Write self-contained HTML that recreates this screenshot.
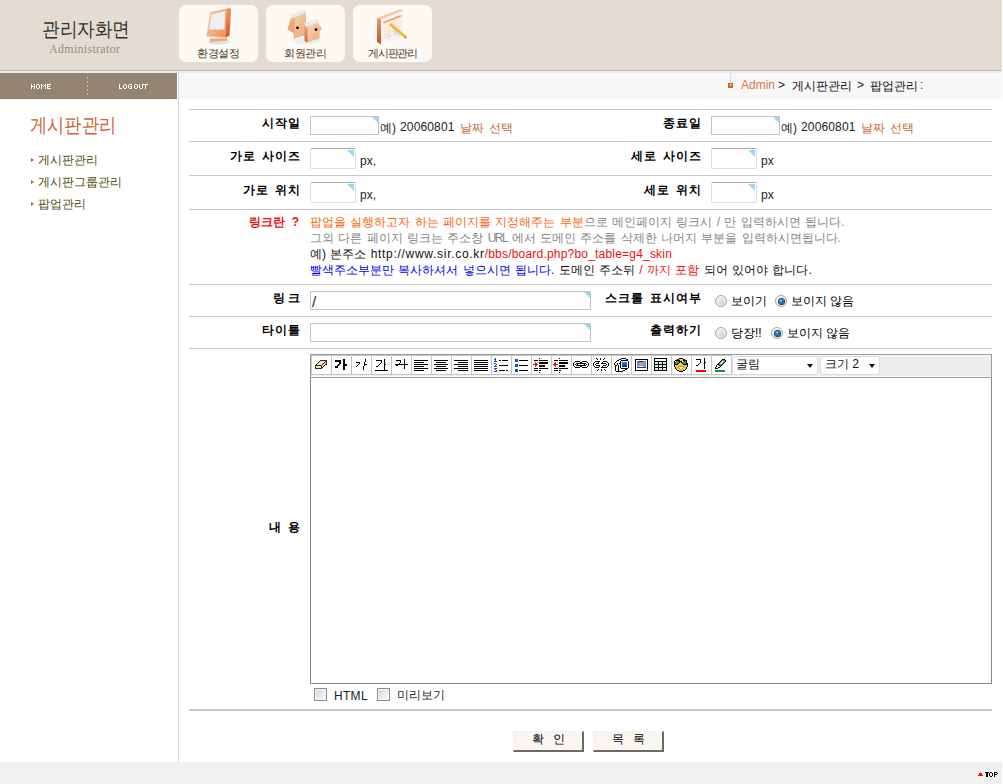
<!DOCTYPE html>
<html><head><meta charset="utf-8">
<style>
*{margin:0;padding:0;box-sizing:border-box}
html,body{width:1003px;height:784px;overflow:hidden;background:#fff;font-family:"Liberation Sans",sans-serif;font-size:12px;color:#333}
.a{position:absolute;white-space:nowrap}
#hdr{position:absolute;left:0;top:0;width:1002px;height:70px;background:#e4dcd3}
#hdrl1{position:absolute;left:0;top:70px;width:1002px;height:1px;background:#c9beb3}
#hdrl2{position:absolute;left:0;top:71px;width:1002px;height:2px;background:#eaebec}
.tab{position:absolute;top:5px;width:79px;height:57px;background:#fdfaf4;border-radius:7px}
.tabt{position:absolute;left:0;width:100%;top:41px;text-align:center;font-size:11px;color:#46392b;letter-spacing:-0.3px}
#nav{position:absolute;left:0;top:73px;width:177px;height:26px;background:#948472;border-bottom:1px solid #8b7a66}
#vline{position:absolute;left:178px;top:73px;width:1px;height:689px;background:#d8d8d8}
#crumb{position:absolute;left:179px;top:73px;width:823px;height:26px;background:#f7f7f7}
.hl{position:absolute;left:189px;width:803px;height:1px;background:#c9c9c9}
.lbl{position:absolute;font-weight:bold;color:#000;text-align:right;white-space:nowrap;letter-spacing:1px;word-spacing:2px}
.inp{position:absolute;border:1px solid #c4c4c4;background:#fff}
.inp:after{content:"";position:absolute;right:0;top:0;border-top:6px solid #93daf4;border-left:6px solid transparent}
.inp2{border-color:#a8a8a8 #d9dde6 #d9dde6 #d9dde6;border-radius:2px}
.inp2:after{top:1px;right:1px;border-top-width:7px;border-left-width:7px}
#foot{position:absolute;left:0;top:762px;width:1002px;height:22px;background:#f1f1f1}
.radio{position:absolute;width:12px;height:12px;border-radius:50%;border:1px solid #a4a4a4;background:radial-gradient(circle at 70% 75%,#cfd3d8 0,#e6e8ea 45%,#fafafa 100%);box-shadow:inset 0 0 0 1px #f4f4f4}
.radio.on:after{content:"";position:absolute;left:2.5px;top:2.5px;width:5px;height:5px;border-radius:50%;background:radial-gradient(circle at 40% 35%,#8fd4ff 0,#1f78c8 40%,#0a3570 100%);box-shadow:0 0 0 1px #1a3a66}
.cb{position:absolute;width:13px;height:13px;border:1px solid #8c8c8c;background:linear-gradient(135deg,#cfd2d6 0,#eceef0 60%,#fff 100%);box-shadow:inset 0 0 0 1px #f6f6f6}
.btn{position:absolute;height:21px;background:#f9f7ef;border-style:solid;border-width:1px 2px 2px 1px;border-color:#f2f2f2 #6a6a6a #6a6a6a #f2f2f2;font-size:12px;color:#000;text-align:center;line-height:14px;word-spacing:6px}
</style></head><body>
<div id="hdr"></div>
<div id="hdrl1"></div><div id="hdrl2"></div>
<div class="a" style="left:42px;top:16px;font-size:20px;color:#2e3032;transform:scaleX(0.88);transform-origin:0 0">관리자화면</div>
<div class="a" style="left:49px;top:42px;font-family:'Liberation Serif',serif;font-size:12px;color:#9b8b79;letter-spacing:0.3px">Administrator</div>

<div class="tab" style="left:179px"><div class="tabt">환경설정</div></div>
<div class="tab" style="left:266px"><div class="tabt">회원관리</div></div>
<div class="tab" style="left:353px"><div class="tabt" style="letter-spacing:-1.1px">게시판관리</div></div>
<svg class="a" style="left:179px;top:0" width="260" height="50"><defs>
<linearGradient id="mg1" x1="0" y1="0" x2="1" y2="1"><stop offset="0" stop-color="#fad4b6"/><stop offset="1" stop-color="#e98f58"/></linearGradient>
<linearGradient id="mg2" x1="0" y1="0" x2="0" y2="1"><stop offset="0" stop-color="#f0925a"/><stop offset="1" stop-color="#c8602e"/></linearGradient>
<linearGradient id="hg" x1="0" y1="0" x2="1" y2="1"><stop offset="0" stop-color="#fbd9b8"/><stop offset="1" stop-color="#eea77a"/></linearGradient>
<linearGradient id="hs" x1="0" y1="0" x2="0" y2="1"><stop offset="0" stop-color="#f2a478"/><stop offset="1" stop-color="#c8683a"/></linearGradient>
<linearGradient id="bs" x1="0" y1="0" x2="0" y2="1"><stop offset="0" stop-color="#ec9a68"/><stop offset="1" stop-color="#b8552a"/></linearGradient>
</defs>
<g transform="translate(-179,0)">
<!-- monitor -->
<ellipse cx="219" cy="42.3" rx="11.5" ry="2.2" fill="#dfe4ea"/>
<polygon points="210.5,38 226.5,37.2 228,40.8 209.5,42.2" fill="#f0a87c"/>
<polygon points="211,38 226.5,37.2 226.8,38.3 210.8,39.2" fill="#f9d6bd"/>
<polygon points="226,9 230.5,7.8 231,11 229.5,36 225,37.5" fill="url(#mg2)"/>
<polygon points="210,12 227,8.5 225.5,37 206.5,36.5" fill="url(#mg1)"/>
<polygon points="211.5,15 225,11.5 224.5,29.5 209,29.5" fill="#efeff2"/>
<polygon points="211.5,15 225,11.5 225,12.5 211.3,16" fill="#fbfbfc"/>
<!-- heads -->
<ellipse cx="306" cy="40.5" rx="15" ry="3.5" fill="#eceef0"/>
<polygon points="291,17 306,11 306,35 294,38.5 293.5,33 287.5,29.5" fill="url(#hg)"/>
<polygon points="291,18 295,17 294.5,38.5 293.5,33 287.5,29.5" fill="#eb9c6c" opacity="0.7"/>
<polygon points="290,15.5 305.5,9 306,12.5 291,19" fill="#e9ebf1"/>
<circle cx="297.5" cy="27.8" r="1.4" fill="#000"/>
<polygon points="305,25.5 318,20.5 318.5,24 322,28.6 319.5,32 319.5,38.5 307,42.5" fill="url(#hg)"/>
<polygon points="304.5,25.5 307.5,26.5 307.5,42.5 304.5,41" fill="url(#hs)"/>
<polygon points="304,23.5 318,18.5 319,22 306,27" fill="#e9ebf1"/>
<circle cx="316" cy="29.6" r="1.4" fill="#000"/>
<!-- board -->
<polygon points="377,18 381.2,19.5 381.2,44.6 377,42" fill="url(#bs)"/>
<polygon points="377,18 400,9.3 403.7,10.4 381.2,19.5" fill="#f7c7a0"/>
<polygon points="381.2,19.5 403.7,10.4 403.7,38.2 381.2,44.6" fill="#f3f3f5"/>
<g stroke="#f7d2b0" stroke-width="0.6">
<line x1="383.5" y1="26" x2="401.5" y2="19"/><line x1="383.5" y1="29" x2="401.5" y2="22"/><line x1="383.5" y1="32" x2="401.5" y2="25"/><line x1="383.5" y1="35" x2="401.5" y2="28"/><line x1="383.5" y1="38" x2="401.5" y2="31"/>
<line x1="389" y1="21" x2="389" y2="40"/><line x1="395" y1="18.5" x2="395" y2="37.5"/>
</g>
<line x1="383.4" y1="22.7" x2="401" y2="15.7" stroke="#ee9a50" stroke-width="1.6"/>
<polygon points="390,24 396,36 402,36" fill="#d8d8dc" opacity="0.7"/>
<line x1="390" y1="24" x2="405.5" y2="37" stroke="#f4b818" stroke-width="2.6"/>
<circle cx="405.8" cy="37.3" r="1.3" fill="#e89040"/>
</g></svg>


<div id="nav"></div>
<svg class="a" style="left:0;top:0" width="180" height="100" shape-rendering="crispEdges"><g fill="#fff"><rect x="31" y="84" width="1" height="1"/><rect x="34" y="84" width="1" height="1"/><rect x="31" y="85" width="1" height="1"/><rect x="34" y="85" width="1" height="1"/><rect x="31" y="86" width="4" height="1"/><rect x="31" y="87" width="1" height="1"/><rect x="34" y="87" width="1" height="1"/><rect x="31" y="88" width="1" height="1"/><rect x="34" y="88" width="1" height="1"/><rect x="37" y="84" width="2" height="1"/><rect x="36" y="85" width="1" height="1"/><rect x="39" y="85" width="1" height="1"/><rect x="36" y="86" width="1" height="1"/><rect x="39" y="86" width="1" height="1"/><rect x="36" y="87" width="1" height="1"/><rect x="39" y="87" width="1" height="1"/><rect x="37" y="88" width="2" height="1"/><rect x="41" y="84" width="1" height="1"/><rect x="45" y="84" width="1" height="1"/><rect x="41" y="85" width="2" height="1"/><rect x="44" y="85" width="2" height="1"/><rect x="41" y="86" width="1" height="1"/><rect x="43" y="86" width="1" height="1"/><rect x="45" y="86" width="1" height="1"/><rect x="41" y="87" width="1" height="1"/><rect x="45" y="87" width="1" height="1"/><rect x="41" y="88" width="1" height="1"/><rect x="45" y="88" width="1" height="1"/><rect x="47" y="84" width="4" height="1"/><rect x="47" y="85" width="1" height="1"/><rect x="47" y="86" width="3" height="1"/><rect x="47" y="87" width="1" height="1"/><rect x="47" y="88" width="4" height="1"/><rect x="119" y="84" width="1" height="1"/><rect x="119" y="85" width="1" height="1"/><rect x="119" y="86" width="1" height="1"/><rect x="119" y="87" width="1" height="1"/><rect x="119" y="88" width="3" height="1"/><rect x="124" y="84" width="2" height="1"/><rect x="123" y="85" width="1" height="1"/><rect x="126" y="85" width="1" height="1"/><rect x="123" y="86" width="1" height="1"/><rect x="126" y="86" width="1" height="1"/><rect x="123" y="87" width="1" height="1"/><rect x="126" y="87" width="1" height="1"/><rect x="124" y="88" width="2" height="1"/><rect x="129" y="84" width="3" height="1"/><rect x="128" y="85" width="1" height="1"/><rect x="128" y="86" width="1" height="1"/><rect x="130" y="86" width="2" height="1"/><rect x="128" y="87" width="1" height="1"/><rect x="131" y="87" width="1" height="1"/><rect x="129" y="88" width="3" height="1"/><rect x="135" y="84" width="2" height="1"/><rect x="134" y="85" width="1" height="1"/><rect x="137" y="85" width="1" height="1"/><rect x="134" y="86" width="1" height="1"/><rect x="137" y="86" width="1" height="1"/><rect x="134" y="87" width="1" height="1"/><rect x="137" y="87" width="1" height="1"/><rect x="135" y="88" width="2" height="1"/><rect x="139" y="84" width="1" height="1"/><rect x="142" y="84" width="1" height="1"/><rect x="139" y="85" width="1" height="1"/><rect x="142" y="85" width="1" height="1"/><rect x="139" y="86" width="1" height="1"/><rect x="142" y="86" width="1" height="1"/><rect x="139" y="87" width="1" height="1"/><rect x="142" y="87" width="1" height="1"/><rect x="140" y="88" width="2" height="1"/><rect x="143" y="84" width="5" height="1"/><rect x="145" y="85" width="1" height="1"/><rect x="145" y="86" width="1" height="1"/><rect x="145" y="87" width="1" height="1"/><rect x="145" y="88" width="1" height="1"/></g></svg>
<div class="a" style="left:87px;top:77px;width:1px;height:18px;background:repeating-linear-gradient(to bottom,#cdbfb0 0,#cdbfb0 2px,transparent 2px,transparent 4px)"></div>

<div id="vline"></div>
<div id="crumb"></div>
<div class="a" style="left:730px;top:73px;width:1px;height:10px;background:#dedede"></div>
<div class="a" style="left:728px;top:83px;width:5px;height:5px;background:#d0642e"></div>
<div class="a" style="left:730px;top:84px;width:0;height:0;border-left:2px solid #fff;border-top:1.5px solid transparent;border-bottom:1.5px solid transparent"></div>
<div class="a" style="left:741px;top:78px;font-size:12px;color:#db7a43">Admin</div>
<div class="a" style="left:778px;top:78px;font-size:12px;color:#222">&gt;</div>
<div class="a" style="left:792px;top:78px;font-size:12px;color:#111">게시판관리</div>
<div class="a" style="left:857px;top:78px;font-size:12px;color:#222">&gt;</div>
<div class="a" style="left:870px;top:78px;font-size:12px;color:#111">팝업관리</div>
<div class="a" style="left:920px;top:78px;font-size:12px;color:#444">:</div>

<div class="a" style="left:30px;top:112px;font-size:20px;color:#cf6236;transform:scaleX(0.86);transform-origin:0 0">게시판관리</div>
<div class="a" style="left:31px;top:158px;width:0;height:0;border-left:3px solid #c8582a;border-top:2.5px solid transparent;border-bottom:2.5px solid transparent"></div>
<div class="a" style="left:31px;top:180px;width:0;height:0;border-left:3px solid #c8582a;border-top:2.5px solid transparent;border-bottom:2.5px solid transparent"></div>
<div class="a" style="left:31px;top:202px;width:0;height:0;border-left:3px solid #c8582a;border-top:2.5px solid transparent;border-bottom:2.5px solid transparent"></div>
<div class="a" style="left:38px;top:152px;color:#4c4a0e">게시판관리</div>
<div class="a" style="left:38px;top:174px;color:#4c4a0e">게시판그룹관리</div>
<div class="a" style="left:38px;top:196px;color:#4c4a0e">팝업관리</div>

<!-- form lines -->
<div class="hl" style="top:109px"></div>
<div class="hl" style="top:141px"></div>
<div class="hl" style="top:175px"></div>
<div class="hl" style="top:209px"></div>
<div class="hl" style="top:284px"></div>
<div class="hl" style="top:316px"></div>
<div class="hl" style="top:348px"></div>
<div class="hl" style="top:709px;height:2px"></div>

<!-- row 1 -->
<div class="lbl" style="left:202px;width:99px;top:115px">시작일</div>
<div class="inp" style="left:310px;top:116px;width:69px;height:19px"></div>
<div class="a" style="left:380px;top:120px;color:#222">예)</div><div class="a" style="left:400px;top:120px;color:#222;letter-spacing:0.15px">20060801</div><div class="a" style="left:460px;top:120px;color:#c8683a;word-spacing:2px">날짜 선택</div>
<div class="lbl" style="left:602px;width:100px;top:115px">종료일</div>
<div class="inp" style="left:711px;top:116px;width:69px;height:19px"></div>
<div class="a" style="left:781px;top:120px;color:#222">예)</div><div class="a" style="left:801px;top:120px;color:#222;letter-spacing:0.15px">20060801</div><div class="a" style="left:861px;top:120px;color:#c8683a;word-spacing:2px">날짜 선택</div>

<!-- row 2 -->
<div class="lbl" style="left:202px;width:99px;top:148px">가로 사이즈</div>
<div class="inp inp2" style="left:310px;top:148px;width:46px;height:21px"></div>
<div class="a" style="left:360px;top:154px;color:#222">px,</div>
<div class="lbl" style="left:602px;width:100px;top:148px">세로 사이즈</div>
<div class="inp inp2" style="left:711px;top:148px;width:46px;height:21px"></div>
<div class="a" style="left:761px;top:154px;color:#222">px</div>

<!-- row 3 -->
<div class="lbl" style="left:202px;width:99px;top:182px">가로 위치</div>
<div class="inp inp2" style="left:310px;top:182px;width:46px;height:21px"></div>
<div class="a" style="left:360px;top:188px;color:#222">px,</div>
<div class="lbl" style="left:602px;width:100px;top:182px">세로 위치</div>
<div class="inp inp2" style="left:711px;top:182px;width:46px;height:21px"></div>
<div class="a" style="left:761px;top:188px;color:#222">px</div>

<!-- link help -->
<div class="lbl" style="left:200px;width:99px;top:214px;color:#f01010;letter-spacing:0;word-spacing:3px">링크란 ?</div>
<div class="a" style="left:310px;top:214px;line-height:16px;word-spacing:1px">
<span style="color:#ff6208">팝업을 실행하고자 하는 페이지를 지정해주는 부분</span><span style="color:#858585">으로 메인페이지 링크시 / 만 입력하시면 됩니다.</span><br>
<span style="color:#858585">그외 다른 페이지 링크는 주소창 <span style="letter-spacing:-1.5px">URL</span> 에서 도메인 주소를 삭제한 나머지 부분을 입력하시면됩니다.</span><br>
<span style="color:#111">예) 본주소 <span style="letter-spacing:0.7px">http://www.sir.co.kr</span></span><span style="color:#f20d0d;letter-spacing:0.2px">/bbs/board.php?bo_table=g4_skin</span><br>
<span style="color:#0000f0">빨색주소부분만 복사하셔서 넣으시면 됩니다.</span><span style="color:#111"> 도메인 주소뒤 </span><span style="color:#f20d0d">/ 까지 포함</span><span style="color:#111"> 되어 있어야 합니다.</span>
</div>

<!-- link row -->
<div class="lbl" style="left:204px;width:99px;top:290px;letter-spacing:3px">링크</div>
<div class="inp" style="left:310px;top:291px;width:281px;height:19px"><span class="a" style="left:1px;top:1px;color:#222;font-size:15px">/</span></div>
<div class="lbl" style="left:602px;width:100px;top:290px">스크롤 표시여부</div>
<div class="radio" style="left:715px;top:295px"></div>
<div class="a" style="left:731px;top:293px;color:#000">보이기</div>
<div class="radio on" style="left:775px;top:295px"></div>
<div class="a" style="left:791px;top:293px;color:#000">보이지 않음</div>

<!-- title row -->
<div class="lbl" style="left:202px;width:99px;top:322px">타이틀</div>
<div class="inp" style="left:310px;top:323px;width:281px;height:19px"></div>
<div class="lbl" style="left:602px;width:100px;top:322px">출력하기</div>
<div class="radio" style="left:715px;top:327px"></div>
<div class="a" style="left:731px;top:325px;color:#000">당장!!</div>
<div class="radio on" style="left:771px;top:327px"></div>
<div class="a" style="left:787px;top:325px;color:#000">보이지 않음</div>

<!-- content -->
<div class="lbl" style="left:202px;width:99px;top:519px">내 용</div>
<div id="editor" class="a" style="left:310px;top:354px;width:682px;height:330px;border:1px solid #8a8a8a;background:#fff"></div>
<svg class="a" style="left:310px;top:354px" width="682" height="24" shape-rendering="crispEdges"><g transform="translate(-310,-354)"><rect x="310" y="354" width="682" height="24" fill="#eeeeee"/><rect x="310" y="354" width="682" height="1" fill="#9a9a9a"/><rect x="310" y="377" width="682" height="1" fill="#9a9a9a"/><rect x="310" y="354" width="1" height="24" fill="#9a9a9a"/><rect x="991" y="354" width="1" height="24" fill="#9a9a9a"/><rect x="311" y="355" width="680" height="1" fill="#fafafa"/><rect x="311" y="376" width="680" height="1" fill="#fafafa"/><rect x="311" y="355" width="21" height="20" fill="#c6c6c6"/><rect x="312" y="356" width="19" height="18" fill="#ffffff"/><rect x="331" y="355" width="21" height="20" fill="#c6c6c6"/><rect x="332" y="356" width="19" height="18" fill="#ffffff"/><rect x="351" y="355" width="21" height="20" fill="#c6c6c6"/><rect x="352" y="356" width="19" height="18" fill="#ffffff"/><rect x="371" y="355" width="21" height="20" fill="#c6c6c6"/><rect x="372" y="356" width="19" height="18" fill="#ffffff"/><rect x="391" y="355" width="21" height="20" fill="#c6c6c6"/><rect x="392" y="356" width="19" height="18" fill="#ffffff"/><rect x="411" y="355" width="21" height="20" fill="#c6c6c6"/><rect x="412" y="356" width="19" height="18" fill="#ffffff"/><rect x="431" y="355" width="21" height="20" fill="#c6c6c6"/><rect x="432" y="356" width="19" height="18" fill="#ffffff"/><rect x="451" y="355" width="21" height="20" fill="#c6c6c6"/><rect x="452" y="356" width="19" height="18" fill="#ffffff"/><rect x="471" y="355" width="21" height="20" fill="#c6c6c6"/><rect x="472" y="356" width="19" height="18" fill="#ffffff"/><rect x="491" y="355" width="21" height="20" fill="#c6c6c6"/><rect x="492" y="356" width="19" height="18" fill="#ffffff"/><rect x="511" y="355" width="21" height="20" fill="#c6c6c6"/><rect x="512" y="356" width="19" height="18" fill="#ffffff"/><rect x="531" y="355" width="21" height="20" fill="#c6c6c6"/><rect x="532" y="356" width="19" height="18" fill="#ffffff"/><rect x="551" y="355" width="21" height="20" fill="#c6c6c6"/><rect x="552" y="356" width="19" height="18" fill="#ffffff"/><rect x="571" y="355" width="21" height="20" fill="#c6c6c6"/><rect x="572" y="356" width="19" height="18" fill="#ffffff"/><rect x="591" y="355" width="21" height="20" fill="#c6c6c6"/><rect x="592" y="356" width="19" height="18" fill="#ffffff"/><rect x="611" y="355" width="21" height="20" fill="#c6c6c6"/><rect x="612" y="356" width="19" height="18" fill="#ffffff"/><rect x="631" y="355" width="21" height="20" fill="#c6c6c6"/><rect x="632" y="356" width="19" height="18" fill="#ffffff"/><rect x="651" y="355" width="21" height="20" fill="#c6c6c6"/><rect x="652" y="356" width="19" height="18" fill="#ffffff"/><rect x="671" y="355" width="21" height="20" fill="#c6c6c6"/><rect x="672" y="356" width="19" height="18" fill="#ffffff"/><rect x="691" y="355" width="21" height="20" fill="#c6c6c6"/><rect x="692" y="356" width="19" height="18" fill="#ffffff"/><rect x="711" y="355" width="21" height="20" fill="#c6c6c6"/><rect x="712" y="356" width="19" height="18" fill="#ffffff"/><rect x="320" y="360" width="7" height="1" fill="#2b2b2b"/><rect x="319" y="361" width="1" height="1" fill="#2b2b2b"/><rect x="320" y="361" width="5" height="1" fill="#fde2c2"/><rect x="325" y="361" width="2" height="1" fill="#2b2b2b"/><rect x="318" y="362" width="1" height="1" fill="#2b2b2b"/><rect x="319" y="362" width="5" height="1" fill="#fde2c2"/><rect x="324" y="362" width="1" height="1" fill="#2b2b2b"/><rect x="325" y="362" width="1" height="1" fill="#f8d3ad"/><rect x="326" y="362" width="1" height="1" fill="#2b2b2b"/><rect x="317" y="363" width="1" height="1" fill="#2b2b2b"/><rect x="318" y="363" width="5" height="1" fill="#fde2c2"/><rect x="323" y="363" width="1" height="1" fill="#2b2b2b"/><rect x="324" y="363" width="2" height="1" fill="#f8d3ad"/><rect x="326" y="363" width="1" height="1" fill="#2b2b2b"/><rect x="316" y="364" width="1" height="1" fill="#2b2b2b"/><rect x="317" y="364" width="5" height="1" fill="#fde2c2"/><rect x="322" y="364" width="1" height="1" fill="#2b2b2b"/><rect x="323" y="364" width="2" height="1" fill="#f8d3ad"/><rect x="325" y="364" width="2" height="1" fill="#2b2b2b"/><rect x="315" y="365" width="7" height="1" fill="#2b2b2b"/><rect x="322" y="365" width="2" height="1" fill="#f8d3ad"/><rect x="324" y="365" width="1" height="1" fill="#2b2b2b"/><rect x="315" y="366" width="1" height="1" fill="#2b2b2b"/><rect x="316" y="366" width="5" height="1" fill="#fde2c2"/><rect x="321" y="366" width="1" height="1" fill="#2b2b2b"/><rect x="322" y="366" width="1" height="1" fill="#f8d3ad"/><rect x="323" y="366" width="1" height="1" fill="#2b2b2b"/><rect x="315" y="367" width="1" height="1" fill="#2b2b2b"/><rect x="316" y="367" width="5" height="1" fill="#fde2c2"/><rect x="321" y="367" width="2" height="1" fill="#2b2b2b"/><rect x="315" y="368" width="7" height="1" fill="#2b2b2b"/><rect x="335" y="360" width="6" height="2" fill="#000"/><rect x="339" y="362" width="2" height="2" fill="#000"/><rect x="338" y="364" width="2" height="1" fill="#000"/><rect x="337" y="365" width="2" height="1" fill="#000"/><rect x="335" y="366" width="3" height="2" fill="#000"/><rect x="343" y="359" width="2" height="11" fill="#000"/><rect x="345" y="364" width="2" height="2" fill="#000"/><rect x="365" y="359" width="1" height="1" fill="#000"/><rect x="365" y="360" width="1" height="1" fill="#000"/><rect x="365" y="361" width="1" height="1" fill="#000"/><rect x="356" y="362" width="4" height="1" fill="#000"/><rect x="364" y="362" width="1" height="1" fill="#000"/><rect x="359" y="363" width="1" height="1" fill="#000"/><rect x="364" y="363" width="1" height="1" fill="#000"/><rect x="358" y="364" width="1" height="1" fill="#000"/><rect x="364" y="364" width="3" height="1" fill="#000"/><rect x="357" y="365" width="1" height="1" fill="#000"/><rect x="364" y="365" width="1" height="1" fill="#000"/><rect x="356" y="366" width="1" height="1" fill="#000"/><rect x="363" y="366" width="1" height="1" fill="#000"/><rect x="363" y="367" width="1" height="1" fill="#000"/><rect x="363" y="368" width="1" height="1" fill="#000"/><rect x="363" y="369" width="1" height="1" fill="#000"/><rect x="384" y="359" width="1" height="1" fill="#000"/><rect x="376" y="360" width="6" height="1" fill="#000"/><rect x="384" y="360" width="1" height="1" fill="#000"/><rect x="381" y="361" width="1" height="1" fill="#000"/><rect x="384" y="361" width="1" height="1" fill="#000"/><rect x="381" y="362" width="1" height="1" fill="#000"/><rect x="384" y="362" width="1" height="1" fill="#000"/><rect x="380" y="363" width="1" height="1" fill="#000"/><rect x="384" y="363" width="1" height="1" fill="#000"/><rect x="379" y="364" width="1" height="1" fill="#000"/><rect x="384" y="364" width="2" height="1" fill="#000"/><rect x="378" y="365" width="1" height="1" fill="#000"/><rect x="384" y="365" width="1" height="1" fill="#000"/><rect x="376" y="366" width="2" height="1" fill="#000"/><rect x="384" y="366" width="1" height="1" fill="#000"/><rect x="384" y="367" width="1" height="1" fill="#000"/><rect x="384" y="368" width="1" height="1" fill="#000"/><rect x="384" y="369" width="1" height="1" fill="#000"/><rect x="375" y="370" width="13" height="1" fill="#000"/><rect x="404" y="359" width="1" height="1" fill="#000"/><rect x="396" y="360" width="5" height="1" fill="#000"/><rect x="404" y="360" width="1" height="1" fill="#000"/><rect x="400" y="361" width="1" height="1" fill="#000"/><rect x="404" y="361" width="1" height="1" fill="#000"/><rect x="400" y="362" width="1" height="1" fill="#000"/><rect x="404" y="362" width="1" height="1" fill="#000"/><rect x="399" y="363" width="1" height="1" fill="#000"/><rect x="404" y="363" width="1" height="1" fill="#000"/><rect x="395" y="364" width="13" height="1" fill="#000"/><rect x="396" y="365" width="2" height="1" fill="#000"/><rect x="404" y="365" width="1" height="1" fill="#000"/><rect x="404" y="366" width="1" height="1" fill="#000"/><rect x="404" y="367" width="1" height="1" fill="#000"/><rect x="404" y="368" width="1" height="1" fill="#000"/><rect x="414" y="360" width="14" height="1" fill="#000"/><rect x="434" y="360" width="14" height="1" fill="#000"/><rect x="454" y="360" width="14" height="1" fill="#000"/><rect x="474" y="360" width="14" height="1" fill="#000"/><rect x="414" y="362" width="10" height="1" fill="#000"/><rect x="436" y="362" width="10" height="1" fill="#000"/><rect x="458" y="362" width="10" height="1" fill="#000"/><rect x="474" y="362" width="14" height="1" fill="#000"/><rect x="414" y="364" width="14" height="1" fill="#000"/><rect x="434" y="364" width="14" height="1" fill="#000"/><rect x="454" y="364" width="14" height="1" fill="#000"/><rect x="474" y="364" width="14" height="1" fill="#000"/><rect x="414" y="366" width="10" height="1" fill="#000"/><rect x="436" y="366" width="10" height="1" fill="#000"/><rect x="458" y="366" width="10" height="1" fill="#000"/><rect x="474" y="366" width="14" height="1" fill="#000"/><rect x="414" y="368" width="14" height="1" fill="#000"/><rect x="434" y="368" width="14" height="1" fill="#000"/><rect x="454" y="368" width="14" height="1" fill="#000"/><rect x="474" y="368" width="14" height="1" fill="#000"/><rect x="414" y="370" width="10" height="1" fill="#000"/><rect x="436" y="370" width="10" height="1" fill="#000"/><rect x="458" y="370" width="10" height="1" fill="#000"/><rect x="474" y="370" width="14" height="1" fill="#000"/><rect x="495" y="358" width="1" height="1" fill="#1452b8"/><rect x="494" y="359" width="2" height="1" fill="#1452b8"/><rect x="495" y="360" width="1" height="1" fill="#1452b8"/><rect x="494" y="361" width="3" height="1" fill="#1452b8"/><rect x="494" y="363" width="2" height="1" fill="#1452b8"/><rect x="496" y="364" width="1" height="1" fill="#1452b8"/><rect x="495" y="365" width="1" height="1" fill="#1452b8"/><rect x="494" y="366" width="3" height="1" fill="#1452b8"/><rect x="494" y="368" width="3" height="1" fill="#1452b8"/><rect x="495" y="369" width="1" height="1" fill="#1452b8"/><rect x="496" y="370" width="1" height="1" fill="#1452b8"/><rect x="494" y="371" width="3" height="1" fill="#1452b8"/><rect x="499" y="360" width="2" height="1" fill="#000"/><rect x="502" y="360" width="6" height="1" fill="#000"/><rect x="499" y="365" width="9" height="1" fill="#000"/><rect x="499" y="370" width="6" height="1" fill="#000"/><rect x="506" y="370" width="2" height="1" fill="#000"/><rect x="515" y="359" width="3" height="3" fill="#1553b6"/><rect x="519" y="360" width="9" height="1" fill="#000"/><rect x="515" y="364" width="3" height="3" fill="#1553b6"/><rect x="519" y="365" width="9" height="1" fill="#000"/><rect x="515" y="369" width="3" height="3" fill="#1553b6"/><rect x="519" y="370" width="9" height="1" fill="#000"/><rect x="539" y="358" width="1" height="1" fill="#000"/><rect x="539" y="372" width="1" height="1" fill="#000"/><rect x="534" y="360" width="4" height="1" fill="#000"/><rect x="534" y="368" width="4" height="1" fill="#000"/><rect x="534" y="370" width="4" height="1" fill="#000"/><rect x="539" y="360" width="9" height="1" fill="#000"/><rect x="539" y="362" width="9" height="2" fill="#000"/><rect x="539" y="365" width="6" height="2" fill="#000"/><rect x="539" y="368" width="9" height="1" fill="#000"/><rect x="539" y="370" width="2" height="1" fill="#000"/><rect x="533" y="364" width="5" height="1" fill="#d8141b"/><rect x="535" y="362" width="1" height="5" fill="#d8141b"/><rect x="536" y="363" width="1" height="3" fill="#d8141b"/><rect x="559" y="358" width="1" height="1" fill="#000"/><rect x="559" y="372" width="1" height="1" fill="#000"/><rect x="554" y="360" width="4" height="1" fill="#000"/><rect x="554" y="368" width="4" height="1" fill="#000"/><rect x="554" y="370" width="4" height="1" fill="#000"/><rect x="559" y="360" width="9" height="1" fill="#000"/><rect x="559" y="362" width="9" height="2" fill="#000"/><rect x="559" y="365" width="6" height="2" fill="#000"/><rect x="559" y="368" width="9" height="1" fill="#000"/><rect x="559" y="370" width="2" height="1" fill="#000"/><rect x="553" y="364" width="5" height="1" fill="#d8141b"/><rect x="555" y="362" width="1" height="5" fill="#d8141b"/><rect x="554" y="363" width="1" height="3" fill="#d8141b"/><rect x="575" y="361" width="5" height="1" fill="#000"/><rect x="582" y="361" width="5" height="1" fill="#000"/><rect x="574" y="362" width="1" height="1" fill="#000"/><rect x="580" y="362" width="2" height="1" fill="#000"/><rect x="587" y="362" width="1" height="1" fill="#000"/><rect x="573" y="363" width="1" height="1" fill="#000"/><rect x="576" y="363" width="10" height="1" fill="#000"/><rect x="588" y="363" width="1" height="1" fill="#000"/><rect x="573" y="364" width="1" height="1" fill="#000"/><rect x="575" y="364" width="1" height="1" fill="#000"/><rect x="577" y="364" width="1" height="1" fill="#000"/><rect x="584" y="364" width="1" height="1" fill="#000"/><rect x="586" y="364" width="1" height="1" fill="#000"/><rect x="588" y="364" width="1" height="1" fill="#000"/><rect x="573" y="365" width="1" height="1" fill="#000"/><rect x="576" y="365" width="10" height="1" fill="#000"/><rect x="588" y="365" width="1" height="1" fill="#000"/><rect x="574" y="366" width="1" height="1" fill="#000"/><rect x="580" y="366" width="2" height="1" fill="#000"/><rect x="587" y="366" width="1" height="1" fill="#000"/><rect x="575" y="367" width="5" height="1" fill="#000"/><rect x="582" y="367" width="5" height="1" fill="#000"/><rect x="596" y="358" width="1" height="1" fill="#000"/><rect x="600" y="358" width="1" height="1" fill="#000"/><rect x="604" y="358" width="1" height="1" fill="#000"/><rect x="597" y="359" width="1" height="1" fill="#000"/><rect x="600" y="359" width="1" height="1" fill="#000"/><rect x="603" y="359" width="1" height="1" fill="#000"/><rect x="595" y="361" width="5" height="1" fill="#000"/><rect x="603" y="361" width="4" height="1" fill="#000"/><rect x="594" y="362" width="1" height="1" fill="#000"/><rect x="598" y="362" width="1" height="1" fill="#000"/><rect x="602" y="362" width="1" height="1" fill="#000"/><rect x="607" y="362" width="1" height="1" fill="#000"/><rect x="593" y="363" width="1" height="1" fill="#000"/><rect x="596" y="363" width="3" height="1" fill="#000"/><rect x="601" y="363" width="5" height="1" fill="#000"/><rect x="608" y="363" width="1" height="1" fill="#000"/><rect x="593" y="364" width="1" height="1" fill="#000"/><rect x="595" y="364" width="1" height="1" fill="#000"/><rect x="606" y="364" width="1" height="1" fill="#000"/><rect x="608" y="364" width="1" height="1" fill="#000"/><rect x="593" y="365" width="1" height="1" fill="#000"/><rect x="596" y="365" width="4" height="1" fill="#000"/><rect x="603" y="365" width="3" height="1" fill="#000"/><rect x="608" y="365" width="1" height="1" fill="#000"/><rect x="594" y="366" width="1" height="1" fill="#000"/><rect x="599" y="366" width="1" height="1" fill="#000"/><rect x="602" y="366" width="1" height="1" fill="#000"/><rect x="607" y="366" width="1" height="1" fill="#000"/><rect x="595" y="367" width="4" height="1" fill="#000"/><rect x="601" y="367" width="6" height="1" fill="#000"/><rect x="598" y="369" width="1" height="1" fill="#000"/><rect x="601" y="369" width="1" height="1" fill="#000"/><rect x="604" y="369" width="1" height="1" fill="#000"/><rect x="597" y="370" width="1" height="1" fill="#000"/><rect x="601" y="370" width="1" height="1" fill="#000"/><rect x="605" y="370" width="1" height="1" fill="#000"/><rect x="621" y="358" width="5" height="1" fill="#000"/><rect x="619" y="359" width="2" height="1" fill="#000"/><rect x="621" y="359" width="5" height="1" fill="#ffffff"/><rect x="626" y="359" width="2" height="1" fill="#000"/><rect x="617" y="360" width="2" height="1" fill="#000"/><rect x="621" y="360" width="7" height="1" fill="#000"/><rect x="616" y="361" width="1" height="1" fill="#000"/><rect x="620" y="361" width="1" height="1" fill="#000"/><rect x="621" y="361" width="7" height="1" fill="#ffffff"/><rect x="628" y="361" width="1" height="1" fill="#000"/><rect x="615" y="362" width="1" height="1" fill="#000"/><rect x="620" y="362" width="1" height="1" fill="#000"/><rect x="621" y="362" width="1" height="1" fill="#ffffff"/><rect x="622" y="362" width="5" height="1" fill="#1a78f8"/><rect x="627" y="362" width="1" height="1" fill="#ffffff"/><rect x="628" y="362" width="1" height="1" fill="#000"/><rect x="614" y="363" width="1" height="1" fill="#000"/><rect x="617" y="363" width="1" height="1" fill="#000"/><rect x="619" y="363" width="2" height="1" fill="#000"/><rect x="621" y="363" width="1" height="1" fill="#ffffff"/><rect x="622" y="363" width="5" height="1" fill="#1a78f8"/><rect x="627" y="363" width="1" height="1" fill="#ffffff"/><rect x="628" y="363" width="1" height="1" fill="#000"/><rect x="614" y="364" width="1" height="1" fill="#000"/><rect x="617" y="364" width="1" height="1" fill="#000"/><rect x="620" y="364" width="1" height="1" fill="#000"/><rect x="621" y="364" width="1" height="1" fill="#ffffff"/><rect x="622" y="364" width="5" height="1" fill="#0a50d0"/><rect x="627" y="364" width="1" height="1" fill="#ffffff"/><rect x="628" y="364" width="1" height="1" fill="#000"/><rect x="615" y="365" width="2" height="1" fill="#000"/><rect x="618" y="365" width="1" height="1" fill="#000"/><rect x="620" y="365" width="1" height="1" fill="#000"/><rect x="621" y="365" width="1" height="1" fill="#ffffff"/><rect x="622" y="365" width="5" height="1" fill="#0a50d0"/><rect x="627" y="365" width="1" height="1" fill="#ffffff"/><rect x="628" y="365" width="1" height="1" fill="#000"/><rect x="615" y="366" width="1" height="1" fill="#000"/><rect x="618" y="366" width="1" height="1" fill="#000"/><rect x="620" y="366" width="1" height="1" fill="#000"/><rect x="621" y="366" width="1" height="1" fill="#ffffff"/><rect x="622" y="366" width="5" height="1" fill="#001a90"/><rect x="627" y="366" width="1" height="1" fill="#ffffff"/><rect x="628" y="366" width="1" height="1" fill="#000"/><rect x="615" y="367" width="1" height="1" fill="#000"/><rect x="618" y="367" width="1" height="1" fill="#000"/><rect x="620" y="367" width="1" height="1" fill="#000"/><rect x="621" y="367" width="7" height="1" fill="#ffffff"/><rect x="628" y="367" width="1" height="1" fill="#000"/><rect x="615" y="368" width="1" height="1" fill="#000"/><rect x="618" y="368" width="1" height="1" fill="#000"/><rect x="621" y="368" width="7" height="1" fill="#000"/><rect x="615" y="369" width="1" height="1" fill="#000"/><rect x="618" y="369" width="1" height="1" fill="#000"/><rect x="625" y="369" width="2" height="1" fill="#000"/><rect x="615" y="370" width="1" height="1" fill="#000"/><rect x="618" y="370" width="1" height="1" fill="#000"/><rect x="623" y="370" width="2" height="1" fill="#000"/><rect x="616" y="371" width="7" height="1" fill="#000"/><rect x="635" y="359" width="13" height="12" fill="#000"/><rect x="636" y="360" width="11" height="10" fill="#fff"/><rect x="637" y="361" width="2" height="1" fill="#6f9cec"/><rect x="639" y="361" width="4" height="1" fill="#2a1a10"/><rect x="643" y="361" width="3" height="1" fill="#6f9cec"/><rect x="637" y="362" width="1" height="1" fill="#6f9cec"/><rect x="638" y="362" width="1" height="1" fill="#2a1a10"/><rect x="639" y="362" width="4" height="1" fill="#d49a86"/><rect x="643" y="362" width="3" height="1" fill="#6f9cec"/><rect x="637" y="363" width="2" height="1" fill="#6f9cec"/><rect x="639" y="363" width="4" height="1" fill="#d49a86"/><rect x="643" y="363" width="3" height="1" fill="#6f9cec"/><rect x="637" y="364" width="2" height="1" fill="#6f9cec"/><rect x="639" y="364" width="3" height="1" fill="#d49a86"/><rect x="642" y="364" width="4" height="1" fill="#6f9cec"/><rect x="637" y="365" width="1" height="1" fill="#6f9cec"/><rect x="638" y="365" width="1" height="1" fill="#8a8a50"/><rect x="639" y="365" width="1" height="1" fill="#b08070"/><rect x="640" y="365" width="2" height="1" fill="#d49a86"/><rect x="642" y="365" width="1" height="1" fill="#b08070"/><rect x="643" y="365" width="1" height="1" fill="#8a8a50"/><rect x="644" y="365" width="2" height="1" fill="#6f9cec"/><rect x="637" y="366" width="1" height="1" fill="#6f9cec"/><rect x="638" y="366" width="6" height="1" fill="#dfe6f4"/><rect x="644" y="366" width="2" height="1" fill="#6f9cec"/><rect x="637" y="367" width="9" height="1" fill="#183a98"/><rect x="654" y="358" width="13" height="13" fill="#000"/><rect x="655" y="359" width="11" height="2" fill="#fff"/><rect x="655" y="362" width="3" height="2" fill="#d8f6f8"/><rect x="659" y="362" width="3" height="2" fill="#d8f6f8"/><rect x="663" y="362" width="3" height="2" fill="#d8f6f8"/><rect x="655" y="365" width="3" height="2" fill="#d8f6f8"/><rect x="659" y="365" width="3" height="2" fill="#d8f6f8"/><rect x="663" y="365" width="3" height="2" fill="#d8f6f8"/><rect x="655" y="368" width="3" height="2" fill="#d8f6f8"/><rect x="659" y="368" width="3" height="2" fill="#d8f6f8"/><rect x="663" y="368" width="3" height="2" fill="#d8f6f8"/><rect x="679" y="358" width="4" height="1" fill="#000"/><rect x="677" y="359" width="2" height="1" fill="#000"/><rect x="679" y="359" width="4" height="1" fill="#f7c94e"/><rect x="683" y="359" width="2" height="1" fill="#000"/><rect x="675" y="360" width="5" height="1" fill="#000"/><rect x="680" y="360" width="3" height="1" fill="#f7c94e"/><rect x="683" y="360" width="4" height="1" fill="#000"/><rect x="674" y="361" width="1" height="1" fill="#000"/><rect x="675" y="361" width="1" height="1" fill="#ffffff"/><rect x="676" y="361" width="3" height="1" fill="#4c8a50"/><rect x="679" y="361" width="3" height="1" fill="#000"/><rect x="682" y="361" width="1" height="1" fill="#ffffff"/><rect x="683" y="361" width="3" height="1" fill="#4c8a50"/><rect x="686" y="361" width="1" height="1" fill="#000"/><rect x="674" y="362" width="1" height="1" fill="#000"/><rect x="675" y="362" width="4" height="1" fill="#4c8a50"/><rect x="679" y="362" width="1" height="1" fill="#000"/><rect x="680" y="362" width="1" height="1" fill="#f7c94e"/><rect x="681" y="362" width="1" height="1" fill="#000"/><rect x="682" y="362" width="4" height="1" fill="#4c8a50"/><rect x="686" y="362" width="1" height="1" fill="#000"/><rect x="674" y="363" width="1" height="1" fill="#000"/><rect x="675" y="363" width="3" height="1" fill="#4c8a50"/><rect x="678" y="363" width="1" height="1" fill="#000"/><rect x="679" y="363" width="3" height="1" fill="#f7c94e"/><rect x="682" y="363" width="1" height="1" fill="#000"/><rect x="683" y="363" width="3" height="1" fill="#4c8a50"/><rect x="686" y="363" width="2" height="1" fill="#000"/><rect x="674" y="364" width="4" height="1" fill="#000"/><rect x="678" y="364" width="5" height="1" fill="#f7c94e"/><rect x="683" y="364" width="5" height="1" fill="#000"/><rect x="674" y="365" width="1" height="1" fill="#000"/><rect x="675" y="365" width="12" height="1" fill="#f7c94e"/><rect x="687" y="365" width="1" height="1" fill="#000"/><rect x="674" y="366" width="1" height="1" fill="#000"/><rect x="675" y="366" width="3" height="1" fill="#f7c94e"/><rect x="678" y="366" width="6" height="1" fill="#b8901e"/><rect x="684" y="366" width="3" height="1" fill="#f7c94e"/><rect x="687" y="366" width="1" height="1" fill="#000"/><rect x="675" y="367" width="1" height="1" fill="#000"/><rect x="676" y="367" width="2" height="1" fill="#f7c94e"/><rect x="678" y="367" width="1" height="1" fill="#b8901e"/><rect x="679" y="367" width="4" height="1" fill="#ffffff"/><rect x="683" y="367" width="1" height="1" fill="#b8901e"/><rect x="684" y="367" width="2" height="1" fill="#f7c94e"/><rect x="686" y="367" width="1" height="1" fill="#000"/><rect x="675" y="368" width="1" height="1" fill="#000"/><rect x="676" y="368" width="3" height="1" fill="#f7c94e"/><rect x="679" y="368" width="1" height="1" fill="#b8901e"/><rect x="680" y="368" width="2" height="1" fill="#ffffff"/><rect x="682" y="368" width="1" height="1" fill="#b8901e"/><rect x="683" y="368" width="3" height="1" fill="#f7c94e"/><rect x="686" y="368" width="1" height="1" fill="#000"/><rect x="676" y="369" width="1" height="1" fill="#000"/><rect x="677" y="369" width="3" height="1" fill="#f7c94e"/><rect x="680" y="369" width="2" height="1" fill="#b8901e"/><rect x="682" y="369" width="3" height="1" fill="#f7c94e"/><rect x="685" y="369" width="1" height="1" fill="#000"/><rect x="677" y="370" width="2" height="1" fill="#000"/><rect x="679" y="370" width="4" height="1" fill="#f7c94e"/><rect x="683" y="370" width="2" height="1" fill="#000"/><rect x="679" y="371" width="4" height="1" fill="#000"/><rect x="704" y="358" width="1" height="1" fill="#000"/><rect x="696" y="359" width="5" height="1" fill="#000"/><rect x="704" y="359" width="1" height="1" fill="#000"/><rect x="700" y="360" width="1" height="1" fill="#000"/><rect x="704" y="360" width="1" height="1" fill="#000"/><rect x="700" y="361" width="1" height="1" fill="#000"/><rect x="704" y="361" width="1" height="1" fill="#000"/><rect x="700" y="362" width="1" height="1" fill="#000"/><rect x="704" y="362" width="2" height="1" fill="#000"/><rect x="699" y="363" width="1" height="1" fill="#000"/><rect x="704" y="363" width="1" height="1" fill="#000"/><rect x="698" y="364" width="1" height="1" fill="#000"/><rect x="704" y="364" width="1" height="1" fill="#000"/><rect x="696" y="365" width="2" height="1" fill="#000"/><rect x="704" y="365" width="1" height="1" fill="#000"/><rect x="704" y="366" width="1" height="1" fill="#000"/><rect x="704" y="367" width="1" height="1" fill="#000"/><rect x="704" y="368" width="1" height="1" fill="#000"/><rect x="696" y="370" width="10" height="2" fill="#f00"/><rect x="722" y="359" width="3" height="1" fill="#000"/><rect x="721" y="360" width="1" height="1" fill="#000"/><rect x="722" y="360" width="3" height="1" fill="#3a9a4a"/><rect x="725" y="360" width="1" height="1" fill="#000"/><rect x="720" y="361" width="1" height="1" fill="#000"/><rect x="721" y="361" width="1" height="1" fill="#3a9a4a"/><rect x="722" y="361" width="2" height="1" fill="#dff5df"/><rect x="724" y="361" width="1" height="1" fill="#3a9a4a"/><rect x="725" y="361" width="1" height="1" fill="#000"/><rect x="719" y="362" width="1" height="1" fill="#000"/><rect x="720" y="362" width="1" height="1" fill="#3a9a4a"/><rect x="721" y="362" width="2" height="1" fill="#dff5df"/><rect x="723" y="362" width="1" height="1" fill="#3a9a4a"/><rect x="724" y="362" width="1" height="1" fill="#000"/><rect x="718" y="363" width="1" height="1" fill="#000"/><rect x="719" y="363" width="1" height="1" fill="#3a9a4a"/><rect x="720" y="363" width="2" height="1" fill="#dff5df"/><rect x="722" y="363" width="1" height="1" fill="#3a9a4a"/><rect x="723" y="363" width="1" height="1" fill="#000"/><rect x="717" y="364" width="2" height="1" fill="#000"/><rect x="719" y="364" width="3" height="1" fill="#3a9a4a"/><rect x="722" y="364" width="1" height="1" fill="#000"/><rect x="716" y="365" width="1" height="1" fill="#000"/><rect x="717" y="365" width="2" height="1" fill="#eeeeee"/><rect x="719" y="365" width="1" height="1" fill="#000"/><rect x="720" y="365" width="1" height="1" fill="#3a9a4a"/><rect x="721" y="365" width="1" height="1" fill="#000"/><rect x="716" y="366" width="1" height="1" fill="#000"/><rect x="717" y="366" width="3" height="1" fill="#eeeeee"/><rect x="720" y="366" width="1" height="1" fill="#000"/><rect x="715" y="367" width="1" height="1" fill="#000"/><rect x="716" y="367" width="2" height="1" fill="#eeeeee"/><rect x="718" y="367" width="2" height="1" fill="#000"/><rect x="715" y="368" width="3" height="1" fill="#000"/><rect x="715" y="370" width="10" height="2" fill="#0a9a3a"/></g></svg>
<div class="a" style="left:732px;top:356px;width:86px;height:19px;background:#fff;border:1px solid #dcdcdc;border-radius:3px"></div>
<div class="a" style="left:736px;top:356px;color:#111">굴림</div>
<div class="a" style="left:807px;top:364px;width:0;height:0;border-top:4px solid #111;border-left:3.5px solid transparent;border-right:3.5px solid transparent"></div>
<div class="a" style="left:820px;top:356px;width:60px;height:19px;background:#fff;border:1px solid #dcdcdc;border-radius:3px"></div>
<div class="a" style="left:825px;top:356px;color:#111">크기 2</div>
<div class="a" style="left:869px;top:364px;width:0;height:0;border-top:4px solid #111;border-left:3.5px solid transparent;border-right:3.5px solid transparent"></div>


<div class="cb" style="left:314px;top:688px"></div>
<div class="a" style="left:334px;top:689px;color:#222;letter-spacing:0.3px">HTML</div>
<div class="cb" style="left:377px;top:688px"></div>
<div class="a" style="left:397px;top:687px;color:#222">미리보기</div>

<div class="btn" style="left:513px;top:731px;width:71px;padding-left:1px">확 인</div>
<div class="btn" style="left:593px;top:731px;width:71px;padding-left:1px">목 록</div>

<div id="foot"></div>
<svg class="a" style="left:970px;top:765px" width="33" height="19" shape-rendering="crispEdges"><g transform="translate(-970,-765)"><g fill="#f00"><rect x="979" y="773" width="3" height="2"/><rect x="978" y="775" width="5" height="1"/></g><g fill="#000"><rect x="985" y="772" width="4" height="1"/><rect x="986" y="773" width="2" height="1"/><rect x="986" y="774" width="2" height="1"/><rect x="986" y="775" width="2" height="1"/><rect x="986" y="776" width="2" height="1"/><rect x="990" y="772" width="2" height="1"/><rect x="989" y="773" width="1" height="1"/><rect x="992" y="773" width="1" height="1"/><rect x="989" y="774" width="1" height="1"/><rect x="992" y="774" width="1" height="1"/><rect x="989" y="775" width="1" height="1"/><rect x="992" y="775" width="1" height="1"/><rect x="990" y="776" width="2" height="1"/><rect x="994" y="772" width="3" height="1"/><rect x="994" y="773" width="1" height="1"/><rect x="997" y="773" width="1" height="1"/><rect x="994" y="774" width="3" height="1"/><rect x="994" y="775" width="1" height="1"/><rect x="994" y="776" width="1" height="1"/></g></g></svg>
</body></html>
